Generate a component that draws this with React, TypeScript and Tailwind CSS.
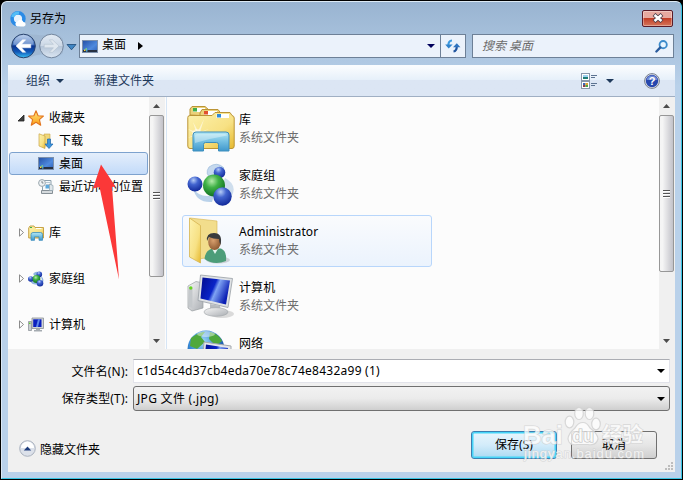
import React from "react";

const ICON_DEFS = (
  <svg width="0" height="0" className="absolute">
    <defs>
      <linearGradient id="folder" x1="0" y1="0" x2="1" y2="1">
        <stop offset="0" stopColor="#fdf2ae" />
        <stop offset="0.6" stopColor="#f7e184" />
        <stop offset="1" stopColor="#e6b92f" />
      </linearGradient>
      <linearGradient id="tray" x1="0" y1="0" x2="0" y2="1">
        <stop offset="0" stopColor="#b5e8f4" />
        <stop offset="0.5" stopColor="#73bfe2" />
        <stop offset="1" stopColor="#3f97cc" />
      </linearGradient>
      <radialGradient id="blueBall" cx="0.4" cy="0.25" r="0.75">
        <stop offset="0" stopColor="#b5ccf6" />
        <stop offset="0.4" stopColor="#4264cf" />
        <stop offset="1" stopColor="#122a9a" />
      </radialGradient>
      <radialGradient id="greenBall" cx="0.4" cy="0.3" r="0.75">
        <stop offset="0" stopColor="#b5ebaa" />
        <stop offset="0.4" stopColor="#3fb146" />
        <stop offset="1" stopColor="#0b6a1c" />
      </radialGradient>
      <linearGradient id="screen" x1="0" y1="0" x2="1" y2="0.4">
        <stop offset="0" stopColor="#020c8c" />
        <stop offset="0.5" stopColor="#0a24c8" />
        <stop offset="0.62" stopColor="#7fa3f3" />
        <stop offset="1" stopColor="#0b1fb4" />
      </linearGradient>
      <linearGradient id="metal" x1="0" y1="0" x2="1" y2="1">
        <stop offset="0" stopColor="#f7f7f7" />
        <stop offset="1" stopColor="#a9adb2" />
      </linearGradient>
      <linearGradient id="desk" x1="0" y1="0" x2="1" y2="1">
        <stop offset="0" stopColor="#234fa4" />
        <stop offset="0.6" stopColor="#4f8ade" />
        <stop offset="1" stopColor="#2e5fb6" />
      </linearGradient>
      <linearGradient id="back" x1="0" y1="0" x2="0" y2="1">
        <stop offset="0" stopColor="#a9c3e8" />
        <stop offset="0.45" stopColor="#3c6cbc" />
        <stop offset="0.5" stopColor="#0b3391" />
        <stop offset="0.75" stopColor="#1259b8" />
        <stop offset="1" stopColor="#39c0f5" />
      </linearGradient>
      <linearGradient id="forward" x1="0" y1="0" x2="0" y2="1">
        <stop offset="0" stopColor="#e3ebf4" />
        <stop offset="0.48" stopColor="#ccd8e6" />
        <stop offset="0.52" stopColor="#b5c5d8" />
        <stop offset="1" stopColor="#dbe6f2" />
      </linearGradient>
      <radialGradient id="globe" cx="0.4" cy="0.3" r="0.7">
        <stop offset="0" stopColor="#a5dcf8" />
        <stop offset="0.5" stopColor="#3a8cd6" />
        <stop offset="1" stopColor="#0d3f91" />
      </radialGradient>
      <radialGradient id="skin" cx="0.4" cy="0.4" r="0.7">
        <stop offset="0" stopColor="#d9a06e" />
        <stop offset="1" stopColor="#85512a" />
      </radialGradient>
      <linearGradient id="star" x1="0" y1="0" x2="0" y2="1">
        <stop offset="0" stopColor="#ffe680" />
        <stop offset="1" stopColor="#fb9f14" />
      </linearGradient>
    </defs>
  </svg>
);

interface IconProps {
  className?: string;
}

const BrowserIcon: React.FC<IconProps> = ({ className }) => (
  <svg viewBox="0 0 16 16" className={className}>
    <circle cx="8" cy="7.8" r="5.9" fill="#e6f2fd" stroke="#2b8be6" strokeWidth="3.6" />
    <path d="M2.500 6A6 6 0 0 1 9 2" fill="none" stroke="#52bdf7" strokeWidth="3" />
    <path
      d="M7.200 15.600a2.700 2.700 0 0 1 .4-5.200 3.200 3.200 0 0 1 5.800.7 2.300 2.300 0 0 1 .6 4.500z"
      fill="#fff"
    />
  </svg>
);

const NavButtons: React.FC = () => (
  <svg viewBox="0 0 70 26" className="ml-px h-[26px] w-[70px] shrink-0">
    <path d="M14 1C26 1 30 3 36 2Q48-1 54 6V20Q48 26 40 23Q30 19 20 25H10z" fill="#9bb2cd" opacity=".65" />
    <circle cx="14.500" cy="13" r="11.800" fill="url(#back)" stroke="#28426c" />
    <path d="M4.500 11.500A10 9.500 0 0 1 24.500 11.500Q14 14 4.500 11.500z" fill="#fff" opacity=".25" />
    <path
      d="M7 13l6.500-6.200h3.200L12.600 11.300H21.800v3.500H12.600l4.100 4.500h-3.200z"
      fill="#fff"
      stroke="#fff"
      strokeWidth=".5"
    />
    <circle cx="42.500" cy="13" r="11.800" fill="url(#forward)" stroke="#73869e" />
    <path
      d="M50 13l-6.500-6.200h-3.200l4.100 4.500H35.200v3.500h9.200l-4.100 4.500h3.200z"
      fill="#dfe7ef"
      stroke="#b4c1cf"
      strokeWidth=".6"
    />
    <path d="M58 11.500h9L62.500 16.800z" fill="#3f86c4" stroke="#1d4a77" strokeWidth=".8" />
  </svg>
);

const DesktopIcon: React.FC<IconProps> = ({ className }) => (
  <svg viewBox="0 0 16 13" className={className}>
    <rect x=".5" y=".5" width="15" height="12" fill="url(#desk)" stroke="#7c90ac" />
    <path d="M1 10h14v2H1z" fill="#273142" />
    <path d="M2 9.500h1.500V11H2z" fill="#ffd83b" />
    <path d="M3.500 8.300H5v1.500H3.500z" fill="#7be07e" />
    <path d="M4 10.300h1.500v1.200H4z" fill="#5bc8ff" />
  </svg>
);

const RefreshIcon: React.FC = () => (
  <svg viewBox="0 0 16 16" className="size-4">
    <path d="M7 2.500Q3.300 2.500 3.300 8" fill="none" stroke="#3d9be0" strokeWidth="2.200" />
    <path d="M.2 6.500h7.400L3.700 10.500z" fill="#2f83cc" />
    <path d="M8.500 13.500Q11.800 13 11.800 8" fill="none" stroke="#20559f" strokeWidth="2.200" />
    <path d="M8 9.300h7.400L11.800 5.200z" fill="#2f74c0" />
  </svg>
);

const SearchIcon: React.FC = () => (
  <svg viewBox="0 0 14 14" className="size-[13px]" fill="none">
    <circle cx="8.800" cy="5" r="3.900" stroke="#3d8bcb" strokeWidth="2" fill="#e9f5ff" />
    <path d="M5.800 8L1.500 12.400" stroke="#2a5b9d" strokeWidth="2.500" strokeLinecap="round" />
  </svg>
);

const ViewIcon: React.FC = () => (
  <svg viewBox="0 0 17 16" className="h-4 w-[17px]">
    <rect x=".5" y=".5" width="8" height="7" fill="#fff" stroke="#8796a9" />
    <path d="M2 2h5v2H2z" fill="#9bd1ef" />
    <path d="M2 4h5v2H2z" fill="#1e7d75" />
    <rect x=".5" y="8.500" width="8" height="7" fill="#fff" stroke="#8796a9" />
    <path d="M2 10h2.500v2H2z" fill="#3a65b5" />
    <path d="M4.500 10H7v2H4.500z" fill="#e0a42e" />
    <path d="M2 12h2.500v2H2z" fill="#8e3c48" />
    <path d="M4.500 12H7v2H4.500z" fill="#4aa44b" />
    <path d="M10 2.500h6M10 4.500h4M10 10.500h6M10 12.500h4" stroke="#5c7391" />
  </svg>
);

const StarIcon: React.FC<IconProps> = ({ className }) => (
  <svg viewBox="0 0 16 16" className={className}>
    <path
      d="M8 .7l2.100 5 5.300.4-4 3.500 1.300 5.600L8 12.300 3.300 15.200l1.300-5.600-4-3.500 5.300-.4z"
      fill="url(#star)"
      stroke="#e2741f"
      strokeLinejoin="round"
      strokeWidth="1.100"
    />
  </svg>
);

const DownloadsIcon: React.FC<IconProps> = ({ className }) => (
  <svg viewBox="0 0 16 16" className={className}>
    <path d="M6 1h6v12H6z" fill="#f0d87a" stroke="#c9a548" strokeWidth=".6" />
    <path d="M1 .8L7 3v12.500L1 13z" fill="url(#folder)" stroke="#c9a548" strokeWidth=".7" />
    <path d="M9.500 6h3v5H15l-4 4.500L7 11h2.500z" fill="#3d95dc" stroke="#1c66ad" strokeWidth=".7" />
  </svg>
);

const RecentIcon: React.FC<IconProps> = ({ className }) => (
  <svg viewBox="0 0 16 16" className={className}>
    <path d="M4.500 1.500H13v10H4.500z" fill="#f6fafc" stroke="#8da0ac" />
    <path d="M8 3.500h4M8 5.500h4" stroke="#b7c7d3" />
    <path d="M7.500 6h4v3.500h-4z" fill="#5da9dd" />
    <path d="M3.500 11.500h11v3h-11z" fill="#d5dadd" stroke="#868f96" />
    <path d="M11.500 5l3.500 1.500v5h-3.500z" fill="#dfe6ea" stroke="#8da0ac" strokeWidth=".7" />
    <circle cx="4" cy="4" r="3.400" fill="#eef2f4" stroke="#9aa6ad" />
    <path d="M4 2v2h1.500" fill="none" stroke="#68747c" strokeWidth=".8" />
  </svg>
);

const LibraryIcon: React.FC<IconProps> = ({ className }) => (
  <svg viewBox="0 0 48 48" className={className}>
    <path d="M3 10V4l2-2.500h13L22 5v6z" fill="#ecd27a" stroke="#bb9435" />
    <path d="M6 3h12v4H6z" fill="#fff" />
    <path d="M6 3h4v3.500H6z" fill="#3fae49" />
    <path d="M13 12V8l2-3.500h16l3 4V14z" fill="#ecd27a" stroke="#bb9435" />
    <path d="M17 6h13v4H17z" fill="#fff" />
    <path d="M17 6h4v3.500h-4z" fill="#e2502c" />
    <path d="M.8 12.500Q.8 10.500 3 10.500H25L28 7.500H43L45 10.500Q47.200 11 47.200 13V41Q47.200 43.500 45 43.500H3Q.8 43.500.8 41z" fill="url(#folder)" stroke="#bb9435" />
    <path d="M29.500 9H42v4H29.500z" fill="#fff" />
    <path d="M30 9h4v3.500h-4z" fill="#2f8bd8" />
    <path d="M10 30L1 33 8 29 1 24 9 27 6 17 11 26 17 14 13 27 22 24z" fill="#fff" opacity=".55" />
    <circle cx="10" cy="29" r="5" fill="#fff" opacity=".45" />
    <path d="M6 30Q6 27 9 27H39Q42 27 42 30V46H31.500V39.500Q31.500 37.500 29.500 37.500H18.500Q16.500 37.500 16.500 39.500V46H6z" fill="url(#tray)" stroke="#3c8ebd" />
    <path d="M8 30.500Q8 29 10 29H38Q40 29 40 30.500Q25 33 8 38z" fill="#fff" opacity=".35" />
  </svg>
);

const SmallLibraryIcon: React.FC<IconProps> = ({ className }) => (
  <svg viewBox="0 0 16 16" className={className}>
    <path d="M1 2.500L2 1h4l1 1.500h8.500V13H.7V3z" fill="url(#folder)" stroke="#c19a3a" strokeWidth=".9" />
    <path d="M2 2h2v1H2z" fill="#3fae49" />
    <path d="M8 3.500h5.500" stroke="#fff" />
    <path d="M3 15.300V9.500Q3 7.500 5 7.500h7.500q2 0 2 2v5.800H11v-3.500H6.500v3.500z" fill="url(#tray)" stroke="#3c8ebd" strokeWidth=".8" />
  </svg>
);

const HomegroupIcon: React.FC<IconProps> = ({ className }) => (
  <svg viewBox="0 0 48 48" className={className}>
    <path d="M22 6Q30 0 37 7Q30 7 25 18Q17 13 22 6z" fill="#c5d9ee" stroke="#8fb2d6" strokeWidth=".6" />
    <path d="M6 27Q13 38 27 34L25 41Q9 42 6 27z" fill="#bad2ea" />
    <path d="M38 17Q53 25 42 39L34 26z" fill="#cfdeed" />
    <circle cx="32.500" cy="11.500" r="5.800" fill="url(#blueBall)" />
    <circle cx="8" cy="23" r="7.500" fill="url(#blueBall)" />
    <circle cx="27" cy="24.500" r="11" fill="url(#greenBall)" />
    <circle cx="35.500" cy="35.500" r="9.200" fill="url(#blueBall)" />
  </svg>
);

const SmallHomegroupIcon: React.FC<IconProps> = ({ className }) => (
  <svg viewBox="0 0 16 16" className={className}>
    <path d="M5 3Q8-1 12 2L8 6z" fill="#8fb4e0" />
    <path d="M2 10Q5 15 10 13V10z" fill="#8fb4e0" />
    <path d="M13 5Q17 8 14.500 12z" fill="#8fb4e0" />
    <circle cx="11.300" cy="3.400" r="2.800" fill="url(#blueBall)" />
    <circle cx="2.800" cy="8" r="2.800" fill="url(#blueBall)" />
    <circle cx="8.500" cy="8" r="3.900" fill="url(#greenBall)" />
    <circle cx="12" cy="12.300" r="3.300" fill="url(#blueBall)" />
  </svg>
);

const UserIcon: React.FC<IconProps> = ({ className }) => (
  <svg viewBox="0 0 48 48" className={className}>
    <path d="M3 1L30 4V39L12 42z" fill="#f2dd8c" stroke="#d5b451" strokeWidth=".6" />
    <path d="M2.500 1L13.500 8.500V46L2.500 40z" fill="url(#folder)" stroke="#d5b451" strokeWidth=".8" />
    <ellipse cx="31" cy="43" rx="12" ry="3.500" fill="#9b9b9b" opacity=".4" />
    <path d="M17.500 42Q18 34 25 31.500H34Q40 34 39 44Q27 49 17.500 42z" fill="#4c9d79" />
    <path d="M24 30L28 37 32 30z" fill="#e5f3ee" />
    <ellipse cx="27.500" cy="25" rx="6.300" ry="8" fill="url(#skin)" />
    <path d="M20 24Q19 16 27 16Q36 16 33.500 28Q32 25 32 22Q26 22 22 20z" fill="#393a3c" />
  </svg>
);

const ComputerIcon: React.FC<IconProps> = ({ className }) => (
  <svg viewBox="0 0 48 48" className={className}>
    <ellipse cx="35" cy="41" rx="12" ry="4" fill="#9b9b9b" opacity=".35" />
    <path d="M1 13L9 8.500 16 10V35L5 38 1 35z" fill="url(#metal)" stroke="#989da1" strokeWidth=".7" />
    <path d="M2 14l3.500 1v20L2 34z" fill="#c4c8cb" />
    <circle cx="3.800" cy="15" r="1.700" fill="#67d420" />
    <path d="M23 31l10 2 1 5H23z" fill="#b7bbc0" />
    <ellipse cx="29" cy="39" rx="12" ry="4.300" fill="url(#metal)" stroke="#a0a4a8" strokeWidth=".6" />
    <path d="M13.500 2L45.500 5.500 41 34.500 11 27.500z" fill="#dfe2e5" stroke="#989ea5" strokeWidth=".8" />
    <path d="M15.500 4.500L43 7.500 39 31.500 13.500 25.500z" fill="url(#screen)" />
  </svg>
);

const NetworkIcon: React.FC<IconProps> = ({ className }) => (
  <svg viewBox="0 0 48 48" className={className}>
    <circle cx="19" cy="20" r="18.500" fill="url(#globe)" />
    <path d="M4 9Q13 2 18 3L14 8 18 13 10 20 3 17zM23 3Q32 5 35 12L29 17 22 10zM2 23L9 25 12 33 8 35Q2 30 2 23z" fill="#4fa83c" />
    <ellipse cx="19" cy="5" rx="9" ry="3" fill="#fff" opacity=".45" />
    <path d="M17 13L44 17V44L15 38z" fill="#e4e6ea" stroke="#a4a8ad" />
    <path d="M19 15.500L41 19V40L17 35z" fill="url(#screen)" />
  </svg>
);

const SmallComputerIcon: React.FC<IconProps> = ({ className }) => (
  <svg viewBox="0 0 16 16" className={className}>
    <path d="M.5 4.500h3v9h-3z" fill="#c9cdd1" stroke="#858b91" strokeWidth=".7" />
    <path d="M1 5.500h1.500v1.500H1z" fill="#5fce2f" />
    <path d="M4 1h11.500v10.500H4z" fill="#cfd3d6" stroke="#8a9096" strokeWidth=".8" />
    <path d="M5.200 2.300h8.300v7.700H5.200z" fill="#0b1fbe" />
    <path d="M10 2.300h2L10 10H8z" fill="#5c86ec" />
    <path d="M8 11.800h4v1.200h2v1.500H6V13h2z" fill="#a5abb1" />
  </svg>
);

interface ScrollbarProps {
  thumb: string;
}

const Scrollbar: React.FC<ScrollbarProps> = ({ thumb }) => (
  <div className="flex w-4 shrink-0 flex-col bg-[#f0f0f0]">
    <div className="flex h-[18px] w-[15px] shrink-0 items-center justify-center">
      <svg viewBox="0 0 7 4" className="h-1 w-[7px]">
        <path d="M0 4L3.500 0 7 4z" fill="#4c4c4c" />
      </svg>
    </div>
    <div
      className={`${thumb} flex w-[15px] shrink-0 flex-col items-center justify-center gap-px rounded-[2px] border border-[#979797] bg-linear-to-r from-[#f5f5f5] from-20% via-[#dfdfe2] via-55% to-[#c2c2c9]`}
    >
      <i className="h-0.5 w-[7px] border-t border-[#555] bg-white" />
      <i className="h-0.5 w-[7px] border-t border-[#555] bg-white" />
      <i className="h-0.5 w-[7px] border-t border-[#555] bg-white" />
    </div>
    <div className="flex w-[15px] grow items-end justify-center pb-[6px]">
      <svg viewBox="0 0 7 4" className="h-1 w-[7px]">
        <path d="M0 0L3.500 4 7 0z" fill="#4c4c4c" />
      </svg>
    </div>
  </div>
);

interface TreeRowProps {
  label: string;
  icon: React.ReactNode;
  open?: boolean;
}

const TreeRow: React.FC<TreeRowProps> = ({ label, icon, open }) => (
  <div className="flex h-[23px] items-center pl-[8px]">
    {open ? (
      <svg viewBox="0 0 8 8" className="mr-[3px] size-2">
        <path d="M7 1v6H1z" fill="#404040" stroke="#222" strokeWidth=".8" />
      </svg>
    ) : (
      <svg viewBox="0 0 8 9" className="mr-[3px] h-[9px] w-2">
        <path d="M2.500 .8v7.400L6.500 4.500z" fill="#fff" stroke="#8b8b8b" />
      </svg>
    )}
    {icon}
    <span className="ml-[5px]">{label}</span>
  </div>
);

interface LinkRowProps {
  label: string;
  icon: React.ReactNode;
  selected?: boolean;
}

const LinkRow: React.FC<LinkRowProps> = ({ label, icon, selected }) => (
  <div
    className={
      selected
        ? "mr-px flex h-[23px] items-center rounded-[3px] border border-[#7da2ce] bg-linear-to-b from-[#e4eefb] to-[#c3dbf9] pl-[28px]"
        : "flex h-[23px] items-center pl-[29px]"
    }
  >
    {icon}
    <span className="ml-[5px] whitespace-nowrap">{label}</span>
  </div>
);

const FILES = [
  { name: "库", Icon: LibraryIcon, hovered: false },
  { name: "家庭组", Icon: HomegroupIcon, hovered: false },
  { name: "Administrator", Icon: UserIcon, hovered: true },
  { name: "计算机", Icon: ComputerIcon, hovered: false },
  { name: "网络", Icon: NetworkIcon, hovered: false },
];

const Caret: React.FC<IconProps> = ({ className }) => (
  <svg viewBox="0 0 8 4" className={`h-1 w-2 shrink-0 ${className || ""}`}>
    <path d="M0 0h8L4 4z" fill="currentColor" />
  </svg>
);

const Watermark: React.FC = () => (
  <div className="pointer-events-none absolute top-[405px] left-[522px] h-[58px] w-[124px]">
    <svg viewBox="0 0 124 58" className="size-full">
      <g fill="#fff" fillOpacity=".75" stroke="#cfcfcf" strokeOpacity=".8" strokeWidth="1.200">
        <ellipse cx="47.500" cy="17" rx="4.300" ry="5.800" />
        <ellipse cx="57" cy="8.500" rx="4.300" ry="6" />
        <ellipse cx="67.500" cy="8.500" rx="4.300" ry="6" />
        <ellipse cx="74" cy="19" rx="4.300" ry="5.800" />
        <path d="M61 17.500Q65 17.500 68 23Q76 29 76 34Q74 41 66 39.500H55Q47 41 46 34Q46 29 53 23Q56 17.500 61 17.500z" />
        <g
          fontFamily="'Liberation Sans', sans-serif"
          fontWeight="bold"
          paintOrder="stroke"
        >
          <text x="1" y="38.500" fontSize="26" textLength="40" lengthAdjust="spacingAndGlyphs">
            Bai
          </text>
          <text x="50" y="37" fontSize="18" stroke="#b0b0b0">
            du
          </text>
          <text
            x="80"
            y="37"
            fontSize="20.500"
            fontFamily="'Noto Sans CJK SC', sans-serif"
          >
            经验
          </text>
        </g>
        <text
          x="2"
          y="53"
          fontSize="13"
          fontFamily="'Liberation Sans', sans-serif"
          textLength="120"
          paintOrder="stroke"
        >
          jingyan.baidu.com
        </text>
      </g>
    </svg>
  </div>
);

const App: React.FC = () => {
  return (
    <div className="relative flex h-[480px] w-[683px] flex-col overflow-hidden bg-black pt-px pr-px pb-px pl-px font-['Noto_Sans','Noto_Sans_CJK_SC',sans-serif] text-[12px] leading-[18px] text-black">
      {ICON_DEFS}
      <div className="flex min-h-0 grow flex-col rounded-t-[6px] border border-t-[#dceaf5] border-r-[#37c4e3] border-b-[#37c4e3] border-l-[#dbe8f5] bg-[#b9d1ea] bg-linear-to-b from-[#99b4d1] to-[#b9d1ea] to-[84px] px-[6px] pb-[6px]">
        {/* title bar */}
        <div className="flex h-[31px] items-center pt-[2px] pl-[2px]">
          <BrowserIcon className="size-4" />
          <span className="ml-1">另存为</span>
          <button
            aria-label="Close"
            className="mr-[2px] mb-px ml-auto flex h-[17px] w-[31px] items-center justify-center rounded-[2px] border border-[#5b1b28] bg-linear-to-b from-[#e7a99f] from-45% via-[#c23e26] via-50% to-[#d4745a] shadow-[inset_0_0_0_1px_rgba(255,255,255,.35)]"
          >
            <svg viewBox="0 0 12 10" className="h-[10px] w-3">
              <path d="M2 1.500l8 7M10 1.500l-8 7" stroke="#4e3f4a" strokeWidth="4.200" />
              <path d="M2.500 2l7 6M9.500 2l-7 6" stroke="#fff" strokeWidth="2.500" />
            </svg>
          </button>
        </div>

        {/* navigation */}
        <div className="flex h-[32px] items-start">
          <NavButtons />
          <div className="mt-px flex h-6 w-[387px] border border-[#6d8097] bg-[#ebf2fb]">
            <div className="flex grow items-center pb-[3px] pl-[2px]">
              <DesktopIcon className="mt-[3px] h-[13px] w-4" />
              <span className="ml-1">桌面</span>
              <svg viewBox="0 0 5 8" className="mt-[3px] ml-[12px] h-2 w-[5px]">
                <path d="M0 0v8l5-4z" fill="#000" />
              </svg>
              <Caret className="mt-[3px] mr-[5px] ml-auto text-[#00005c]" />
            </div>
            <div className="flex w-[25px] items-center justify-center border-l border-[#6d8097]">
              <RefreshIcon />
            </div>
          </div>
          <div className="mt-px ml-[6px] flex h-6 w-[202px] items-center border border-[#6d8097] bg-[#ebf2fb] pr-[5px] pl-[9px]">
            <span className="grow text-[#6d6d6d] italic">搜索 桌面</span>
            <SearchIcon />
          </div>
        </div>

        <div className="flex min-h-0 grow flex-col bg-[#f0f0f0]">
          {/* toolbar */}
          <div className="flex h-8 shrink-0 items-center border-b border-[#a0afc3] bg-linear-to-b from-[#fafcfe] from-5% via-[#e6f0fa] via-48% to-[#dce6f4] to-50% pl-[18px] text-[#1e395b]">
            <span>组织</span>
            <Caret className="ml-[6px]" />
            <span className="ml-[30px]">新建文件夹</span>
            <div className="mr-[15px] ml-auto flex items-center">
              <ViewIcon />
              <Caret className="ml-2" />
              <svg viewBox="0 0 16 16" className="ml-[30px] size-4">
                <circle cx="8" cy="8" r="7.400" fill="#e4e6ea" stroke="#777f8d" />
                <circle cx="8" cy="8" r="6.200" fill="#2647ad" />
                <path d="M2.500 7A5.600 5.600 0 0 1 13.500 7z" fill="#6f8bd6" />
                <text
                  x="8"
                  y="12"
                  textAnchor="middle"
                  fontSize="11"
                  fontWeight="bold"
                  fill="#fff"
                  fontFamily="'Liberation Sans', sans-serif"
                >
                  ?
                </text>
              </svg>
            </div>
          </div>

          {/* panes */}
          <div className="flex h-[252px] shrink-0 overflow-hidden bg-[#fcfcfc]">
            <div className="w-[141px] shrink-0 pt-[9px] pl-px">
              <TreeRow label="收藏夹" open icon={<StarIcon className="size-4" />} />
              <LinkRow label="下载" icon={<DownloadsIcon className="size-4" />} />
              <LinkRow
                label="桌面"
                selected
                icon={<DesktopIcon className="h-[13px] w-4" />}
              />
              <LinkRow
                label="最近访问的位置"
                icon={<RecentIcon className="size-4" />}
              />
              <div className="mt-[23px]">
                <TreeRow
                  label="库"
                  icon={<SmallLibraryIcon className="size-4" />}
                />
              </div>
              <div className="mt-[23px]">
                <TreeRow
                  label="家庭组"
                  icon={<SmallHomegroupIcon className="size-4" />}
                />
              </div>
              <div className="mt-[23px]">
                <TreeRow
                  label="计算机"
                  icon={<SmallComputerIcon className="size-4" />}
                />
              </div>
            </div>
            <Scrollbar thumb="h-[162px]" />
            <div className="w-[2px] shrink-0 border-r border-[#d6e5f5]" />
            <div className="flex grow flex-col gap-1 pt-[6px] pl-[15px]">
              {FILES.map(({ name, Icon, hovered }) => (
                <div
                  key={name}
                  className={`flex h-[52px] w-[250px] shrink-0 items-center rounded-[3px] border pl-1 ${
                    hovered
                      ? "border-[#b8d6fb] bg-linear-to-b from-[#fafbfd] to-[#ebf3fd]"
                      : "border-transparent"
                  }`}
                >
                  <Icon className="size-12 shrink-0" />
                  <div className="ml-1">
                    <div className="tracking-[0.1px]">{name}</div>
                    <div className="text-[#6d6d6d]">系统文件夹</div>
                  </div>
                </div>
              ))}
            </div>
            <Scrollbar thumb="h-[157px]" />
          </div>

          {/* file name form */}
          <div className="flex flex-col gap-[3px] pt-[10px] pr-[5px]">
            <div className="flex h-6 items-center">
              <label className="w-[125px] pt-px pr-[5px] text-right tracking-[0.15px]">
                文件名(N):
              </label>
              <div className="flex h-full grow items-center justify-between border border-[#e2e3ea] border-t-[#abadb3] bg-white pr-1 pl-[3px]">
                <span className="tracking-[0.25px]">
                  c1d54c4d37cb4eda70e78c74e8432a99 (1)
                </span>
                <Caret />
              </div>
            </div>
            <div className="flex h-[25px] items-center">
              <label className="w-[125px] pr-[5px] text-right tracking-[0.15px]">
                保存类型(T):
              </label>
              <div className="flex h-full grow items-center justify-between rounded-[3px] border border-[#707070] bg-linear-to-b from-[#f2f2f2] via-[#ebebeb] via-50% to-[#cfcfcf] pr-1 pl-[3px]">
                <span className="tracking-[0.3px]">JPG 文件 (.jpg)</span>
                <Caret />
              </div>
            </div>
          </div>

          {/* actions */}
          <div className="mt-[20px] flex items-center pr-[18px] pl-[11px]">
            <svg viewBox="0 0 17 17" className="mt-1.5 size-[17px]">
              <circle cx="8.500" cy="8.500" r="7.800" fill="#dce1ea" stroke="#a9b1be" />
              <path d="M2 8A6.500 6.500 0 0 1 15 8z" fill="#fff" />
              <path d="M4.800 10.500h7.400L8.500 6.500z" fill="#1f3d7c" />
            </svg>
            <span className="mt-2.5 ml-1">隐藏文件夹</span>
            <button className="ml-auto h-7 w-[86px] rounded-[3px] border border-[#3c7fb1] bg-linear-to-b from-[#e9f5fc] via-[#d3ecfa] via-50% to-[#a9d9f2] shadow-[inset_0_0_0_1.500px_#45d4f8]">
              保存(S)
            </button>
            <button className="ml-[14px] h-7 w-[86px] rounded-[3px] border border-[#707070] bg-linear-to-b from-[#f2f2f2] via-[#e6e6e6] via-50% to-[#cfcfcf]">
              取消
            </button>
          </div>
          <div className="mt-auto flex justify-end p-[2px]">
            <svg viewBox="0 0 8 8" className="size-2">
              <path
                d="M6 0h2v2H6zM3 3h2v2H3zM6 3h2v2H6zM0 6h2v2H0zM3 6h2v2H3zM6 6h2v2H6z"
                fill="#bdbdbd"
              />
            </svg>
          </div>
        </div>
      </div>

      <svg
        viewBox="0 0 28 118"
        className="pointer-events-none absolute top-[163px] left-[92px] h-[118px] w-7"
      >
        <path d="M9 1.500L1 25.500 7.500 24 27 116.500 20 24 23.500 23.500z" fill="#fb3838" />
      </svg>
      <Watermark />
    </div>
  );
};

export default App;
